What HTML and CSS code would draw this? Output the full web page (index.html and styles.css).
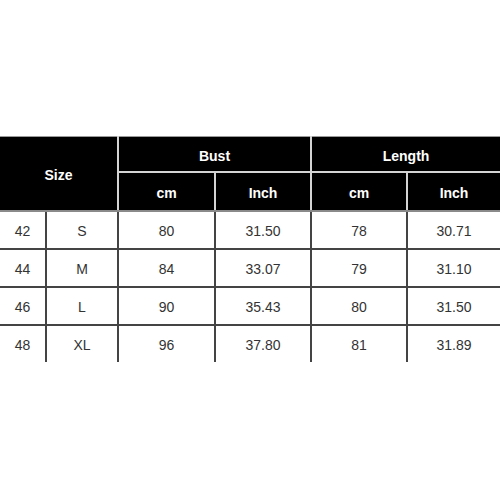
FILE: index.html
```
<!DOCTYPE html>
<html>
<head>
<meta charset="utf-8">
<link rel="stylesheet" href="styles.css">
</head>
<body>
<table class="chart">
  <colgroup>
    <col class="c1"><col class="c2"><col class="c3"><col class="c4"><col class="c5"><col class="c6">
  </colgroup>
  <thead>
    <tr class="h1">
      <th colspan="2" rowspan="2" class="size">Size</th>
      <th colspan="2" class="grp">Bust</th>
      <th colspan="2" class="grp last">Length</th>
    </tr>
    <tr class="h2">
      <th>cm</th><th>Inch</th><th>cm</th><th class="last">Inch</th>
    </tr>
  </thead>
  <tbody>
    <tr><td>42</td><td>S</td><td>80</td><td>31.50</td><td>78</td><td class="last">30.71</td></tr>
    <tr><td>44</td><td>M</td><td>84</td><td>33.07</td><td>79</td><td class="last">31.10</td></tr>
    <tr><td>46</td><td>L</td><td>90</td><td>35.43</td><td>80</td><td class="last">31.50</td></tr>
    <tr class="end"><td>48</td><td>XL</td><td>96</td><td>37.80</td><td>81</td><td class="last">31.89</td></tr>
  </tbody>
</table>
</body>
</html>
```
FILE: styles.css
```
html, body {
  margin: 0;
  padding: 0;
  background: #ffffff;
}
body {
  padding-top: 136px;
  font-family: "Liberation Sans", Arial, sans-serif;
}
.chart {
  width: 500px;
  table-layout: fixed;
  border-collapse: collapse;
  border-spacing: 0;
}
.c1 { width: 46px; }
.c2 { width: 72px; }
.c3 { width: 97px; }
.c4 { width: 96px; }
.c5 { width: 96px; }
.c6 { width: 93px; }

.chart th {
  background: #000000;
  color: #ffffff;
  font-weight: bold;
  font-size: 14px;
  padding: 3px 0 0;
  text-align: center;
  border-right: 2px solid #d4d4d4;
  border-top: 1px solid #9a9a9a;
}
.chart th.last { border-right: none; }
.h1 th { height: 31px; }
.h1 th.grp { border-bottom: 2px solid #d4d4d4; }
.h2 th { height: 34px; border-top: 2px solid #d4d4d4; }
.chart thead tr:last-child th,
.chart th.size { border-bottom: 2px solid #8a8a8a; }

.chart td {
  color: #333333;
  font-size: 14px;
  text-align: center;
  padding: 1px 0 0;
  height: 35px;
  border-right: 2px solid #444444;
  border-bottom: 2px solid #444444;
}
.chart td.last { border-right: none; }
.chart tr.end td { border-bottom: none; height: 35px; }
```
